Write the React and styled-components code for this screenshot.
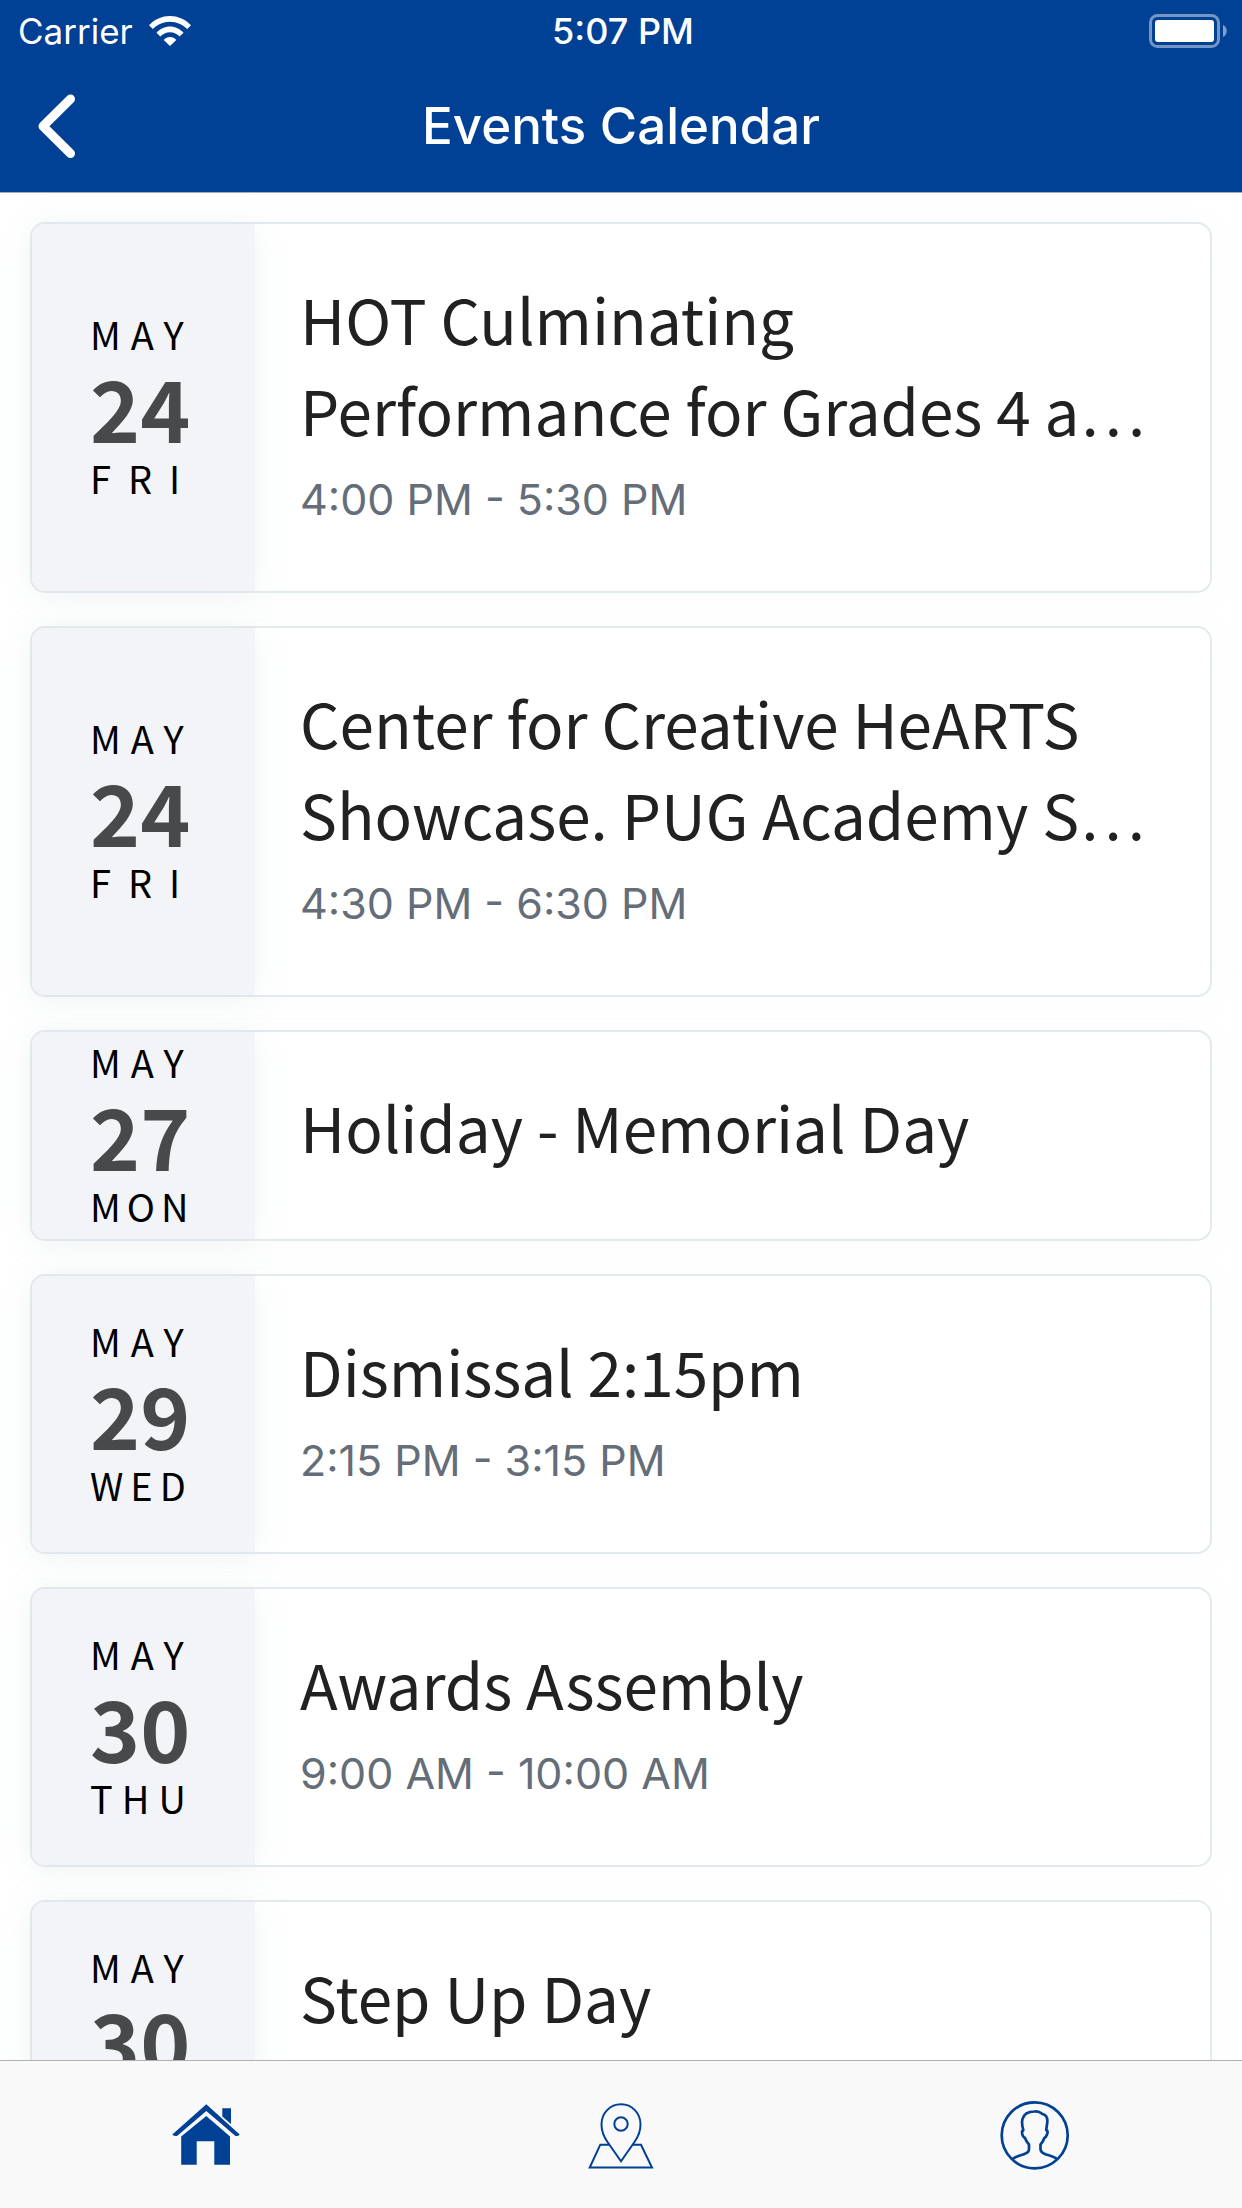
import React from 'react';
import styled, { createGlobalStyle } from 'styled-components';

const palette = {
  blue: '#004095',
  panel: '#f3f4f8',
  border: '#e3eaed',
  title: '#212121',
  number: '#48494b',
  time: '#646d78',
};

const uiFont = 'Inter, "Liberation Sans", sans-serif';
const textFont = '"Noto Sans CJK KR", "Noto Sans", sans-serif';

const GlobalStyle = createGlobalStyle`
  body {
    margin: 0;
    background: #fff;
  }
  * {
    box-sizing: border-box;
  }
`;

const Screen = styled.div`
  display: flex;
  flex-direction: column;
  height: 100vh;
  overflow: hidden;
  font-family: ${textFont};
`;

// top of the screen

const Header = styled.header`
  flex: none;
  border-bottom: 1px solid #a9adb2;
  color: #fff;
  background: ${palette.blue};
  font-family: ${uiFont};
`;

const StatusBar = styled.div`
  display: grid;
  grid-template-columns: 1fr auto 1fr;
  align-items: center;
  height: 60px;
  padding: 2px 14px 0 18px;
  font-size: 35px;
  line-height: 42px;
`;

const Carrier = styled.div`
  display: flex;
  align-items: center;
  gap: 16px;
`;

const Clock = styled.time`
  font-size: 36px;
  font-weight: 500;
`;

const Battery = styled.svg`
  justify-self: end;
`;

const NavBar = styled.div`
  display: grid;
  grid-template-columns: 108px 1fr 108px;
  align-items: center;
  height: 132px;
`;

const BackButton = styled.button`
  display: flex;
  align-items: center;
  height: 132px;
  padding: 0 0 0 36px;
  border: none;
  color: inherit;
  background: none;
`;

const PageTitle = styled.h1`
  margin: 0;
  font-size: 51px;
  font-weight: 500;
  line-height: 60px;
  text-align: center;
`;

// list of events

const EventList = styled.main`
  display: flex;
  flex: 1;
  flex-direction: column;
  gap: 33px;
  min-height: 0;
  padding: 29px 30px;
  overflow-y: auto;
  scrollbar-width: none;
`;

const Card = styled.article`
  display: flex;
  flex: none;
  border: 2px solid ${palette.border};
  border-radius: 15px;
  box-shadow: 0 3px 30px rgba(200, 215, 215, 0.08);
`;

const DatePanel = styled.div`
  display: flex;
  flex: none;
  flex-direction: column;
  justify-content: center;
  width: 223px;
  padding: 3px 0 6px 58px;
  border-radius: 13px 0 0 13px;
  background: ${palette.panel};
  box-shadow: 0 3px 30px rgba(200, 220, 220, 0.25);
`;

const DateWord = styled.span`
  color: #000;
  font-size: 38px;
  line-height: 54px;
  letter-spacing: ${({ $spacing }) => $spacing}px;
`;

const DateNumber = styled.span`
  color: ${palette.number};
  font-size: 85px;
  font-weight: 700;
  line-height: 90px;
`;

const CardBody = styled.div`
  flex: 1;
  min-width: 0;
  padding: 49px 45px 65px;
`;

const EventTitle = styled.h2`
  display: -webkit-box;
  margin: 0;
  overflow: hidden;
  color: ${palette.title};
  font-size: 62px;
  font-weight: 400;
  line-height: 91px;
  -webkit-box-orient: vertical;
  -webkit-line-clamp: 2;
`;

const EventTime = styled.p`
  margin: 17px 0 0;
  color: ${palette.time};
  font-family: ${uiFont};
  font-size: 43px;
  line-height: 54px;
`;

// bottom tabs

const TabBar = styled.nav`
  display: flex;
  flex: none;
  height: 148px;
  border-top: 1px solid #b0b0b0;
  background: #f9f9f9;
`;

const Tab = styled.a`
  display: flex;
  flex: 1;
  align-items: center;
  justify-content: center;
  color: ${palette.blue};
`;

const WifiIcon = () => (
  <svg width="42" height="30" viewBox="0 0 42 30" fill="currentColor" aria-hidden="true">
    <path d="M0 9.200C5.500 3.400 12.800 0 21 0s15.500 3.400 21 9.200l-3.800 3.900C33.700 8.500 27.700 5.700 21 5.700S8.300 8.500 3.800 13.100z" />
    <path d="M7.500 16.700C11 12.900 15.700 10.500 21 10.500s10 2.400 13.500 6.200l-3.800 3.900C28.200 17.900 24.800 16.200 21 16.200s-7.200 1.700-9.700 4.400z" />
    <path d="M14.700 24.100C16.300 22.200 18.500 21 21 21s4.700 1.200 6.300 3.100L21 30z" />
  </svg>
);

const BatteryIcon = () => (
  <Battery width="79" height="34" viewBox="0 0 79 34" role="img" aria-label="Battery full">
    <rect x="1.500" y="1.500" width="68" height="31" rx="7" fill="none" stroke="#fff" strokeWidth="3" opacity="0.45" />
    <rect x="6" y="6" width="59" height="22" rx="3" fill="#fff" />
    <path d="M74 11c5 2 5 10 0 12z" fill="#fff" opacity="0.5" />
  </Battery>
);

const BackIcon = () => (
  <svg width="42" height="66" viewBox="0 0 42 66" fill="none" aria-hidden="true">
    <path d="M34.500 6L7 33.300l27.500 27.200" stroke="currentColor" strokeWidth="9" strokeLinecap="round" strokeLinejoin="round" />
  </svg>
);

const HomeIcon = () => (
  <svg width="72" height="72" viewBox="0 0 72 72" fill="currentColor" aria-hidden="true">
    <path d="M35.300 5.300L68.700 35.400Q67.500 37.300 64.500 37L35.300 12 6 37Q2.800 37.300 1.300 35.400z" />
    <path d="M51.300 9.300H60V25l-8.700-7.500z" />
    <path d="M35.300 17L59 37.500v28.200H43.300V42.300H25.700v23.400H10.200V37.500z" />
  </svg>
);

const MapIcon = () => (
  <svg width="72" height="72" viewBox="0 0 72 72" fill="none" stroke="currentColor" strokeWidth="2" aria-hidden="true">
    <path d="M36 62.300L22.500 43C19 38 16.500 32 16.500 25.500 16.500 14 25 5.300 36 5.300S55.500 14 55.500 25.500C55.500 32 53 38 49.500 43z" />
    <circle cx="36" cy="25" r="6.700" />
    <path d="M24.500 45.700H15.300L4.700 68.600H67L56 45.700h-8.500" />
  </svg>
);

const UserIcon = () => (
  <svg width="72" height="72" viewBox="0 0 72 72" fill="none" stroke="currentColor" strokeWidth="2.700" strokeLinejoin="round" aria-hidden="true">
    <circle cx="35.700" cy="36.300" r="33" />
    <path d="M13.700 60C17 57 22 56.500 26 54.700Q30 53.500 30 50V45.500Q27.500 43 26 39C24 38 23 35.500 23 32.500L24.300 31C23 27 22.800 23 23.500 20 25 14.500 30 12.500 35.500 12.500 38.500 12 41 13 43.500 15 48 16 48.800 19.500 48.200 24L47.200 31Q49.500 32 48 35.500 47 38.500 45.300 39 44 43 41.500 45.500V50Q41.500 53 45.300 54.700C49.500 56.500 54.500 57 58 60" />
  </svg>
);

// spacing evens out the widths of the short day names
const events = [
  { number: 24, day: 'FRI', spacing: 17, title: 'HOT Culminating Performance for Grades 4 a…', time: '4:00 PM - 5:30 PM' },
  { number: 24, day: 'FRI', spacing: 17, title: 'Center for Creative HeARTS Showcase. PUG Academy S…', time: '4:30 PM - 6:30 PM' },
  { number: 27, day: 'MON', spacing: 6, title: 'Holiday - Memorial Day' },
  { number: 29, day: 'WED', spacing: 7, title: 'Dismissal 2:15pm', time: '2:15 PM - 3:15 PM' },
  { number: 30, day: 'THU', spacing: 9, title: 'Awards Assembly', time: '9:00 AM - 10:00 AM' },
  { number: 30, day: 'THU', spacing: 9, title: 'Step Up Day', time: '9:00 AM - 10:00 AM' },
];

const EventCard = ({ event }) => (
  <Card>
    <DatePanel>
      <DateWord $spacing={10}>MAY</DateWord>
      <DateNumber>{event.number}</DateNumber>
      <DateWord $spacing={event.spacing}>{event.day}</DateWord>
    </DatePanel>
    <CardBody>
      <EventTitle>{event.title}</EventTitle>
      {event.time && <EventTime>{event.time}</EventTime>}
    </CardBody>
  </Card>
);

const App = () => (
  <Screen>
    <GlobalStyle />
    <Header>
      <StatusBar>
        <Carrier>
          Carrier
          <WifiIcon />
        </Carrier>
        <Clock>5:07 PM</Clock>
        <BatteryIcon />
      </StatusBar>
      <NavBar>
        <BackButton type="button" aria-label="Back">
          <BackIcon />
        </BackButton>
        <PageTitle>Events Calendar</PageTitle>
      </NavBar>
    </Header>
    <EventList>
      {events.map((event, i) => (
        <EventCard key={i} event={event} />
      ))}
    </EventList>
    <TabBar>
      <Tab href="#home" aria-label="Home">
        <HomeIcon />
      </Tab>
      <Tab href="#map" aria-label="Map">
        <MapIcon />
      </Tab>
      <Tab href="#profile" aria-label="Profile">
        <UserIcon />
      </Tab>
    </TabBar>
  </Screen>
);

export default App;
